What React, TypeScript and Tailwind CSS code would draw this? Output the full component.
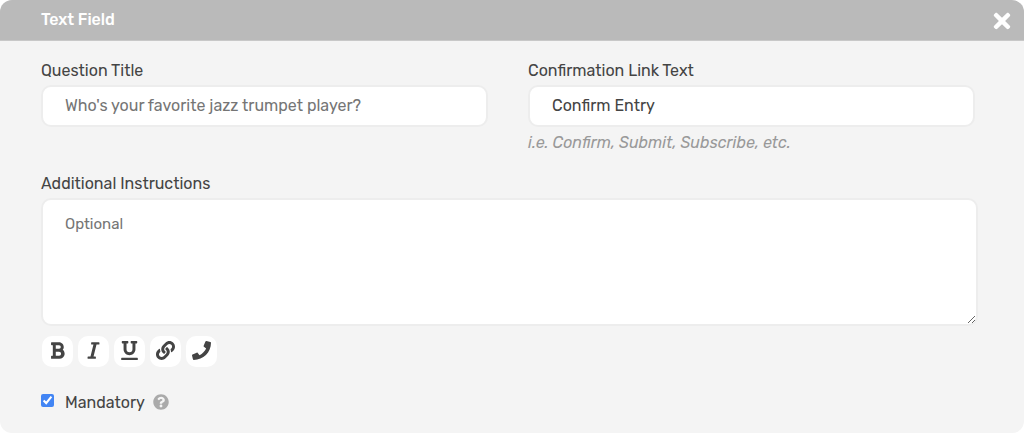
import React, { useState } from "react";
import {
    FaBold,
    FaItalic,
    FaLink,
    FaPhone,
    FaQuestionCircle,
    FaTimes,
    FaUnderline,
} from "react-icons/fa";

const tools = [
    { label: "Bold", Icon: FaBold },
    { label: "Italic", Icon: FaItalic },
    { label: "Underline", Icon: FaUnderline },
    { label: "Link", Icon: FaLink },
    { label: "Phone", Icon: FaPhone },
];

const fieldStyle =
    "block w-full rounded-[10px] border-2 border-[#ededed] bg-white outline-none placeholder:text-[#757575]";

const App = () => {
    const [linkText, setLinkText] = useState("Confirm Entry");
    const [mandatory, setMandatory] = useState(true);

    return (
        <div className="bg-white font-[Rubik,Roboto,sans-serif] text-base leading-5 text-[#444]">
            <section className="overflow-hidden rounded-xl bg-[#f4f4f4]">
                <header className="flex h-[41px] items-center justify-between border-b border-[#c8c8c8] bg-[#bababa] pl-[41px] pr-2.5 text-white">
                    <h2 className="text-base font-medium">Text Field</h2>
                    <button type="button" aria-label="Close">
                        <FaTimes className="mt-0.5 size-6" />
                    </button>
                </header>

                <form className="pb-5 pl-[41px] pr-[46px] pt-5">
                    <div className="grid grid-cols-2 gap-10 pr-[3px]">
                        <div>
                            <label htmlFor="title">Question Title</label>
                            <input
                                id="title"
                                type="text"
                                placeholder="Who's your favorite jazz trumpet player?"
                                className={`${fieldStyle} mt-1 h-[42px] px-[22px] pb-0.5`}
                            />
                        </div>
                        <div>
                            <label htmlFor="linkText">Confirmation Link Text</label>
                            <input
                                id="linkText"
                                type="text"
                                value={linkText}
                                onChange={(e) => setLinkText(e.target.value)}
                                className={`${fieldStyle} mt-1 h-[42px] px-[22px] pb-0.5`}
                            />
                            <p className="mt-1.5 italic text-[#999]">
                                i.e. Confirm, Submit, Subscribe, etc.
                            </p>
                        </div>
                    </div>

                    <div className="mt-[21px]">
                        <label htmlFor="instructions">Additional Instructions</label>
                        <textarea
                            id="instructions"
                            placeholder="Optional"
                            className={`${fieldStyle} mt-1 h-32 resize px-[22px] py-3.5 text-[15px]`}
                        />
                    </div>

                    <div className="mt-2.5 flex gap-[5px] pl-px">
                        {tools.map(({ label, Icon }) => (
                            <button
                                key={label}
                                type="button"
                                aria-label={label}
                                className="flex size-[31px] items-center justify-center rounded-[10px] bg-white pb-0.5"
                            >
                                <Icon className="size-[19px]" />
                            </button>
                        ))}
                    </div>

                    <div className="mt-[26px] flex items-center">
                        <input
                            id="mandatory"
                            type="checkbox"
                            checked={mandatory}
                            onChange={(e) => setMandatory(e.target.checked)}
                            className="mb-1.5 size-[13px] accent-[#4285f4]"
                        />
                        <label htmlFor="mandatory" className="ml-[11px]">
                            Mandatory
                        </label>
                        <button type="button" aria-label="Help" className="mb-0.5 ml-2 text-[#aaa]">
                            <FaQuestionCircle className="size-4" />
                        </button>
                    </div>
                </form>
            </section>
        </div>
    );
};

export default App;
